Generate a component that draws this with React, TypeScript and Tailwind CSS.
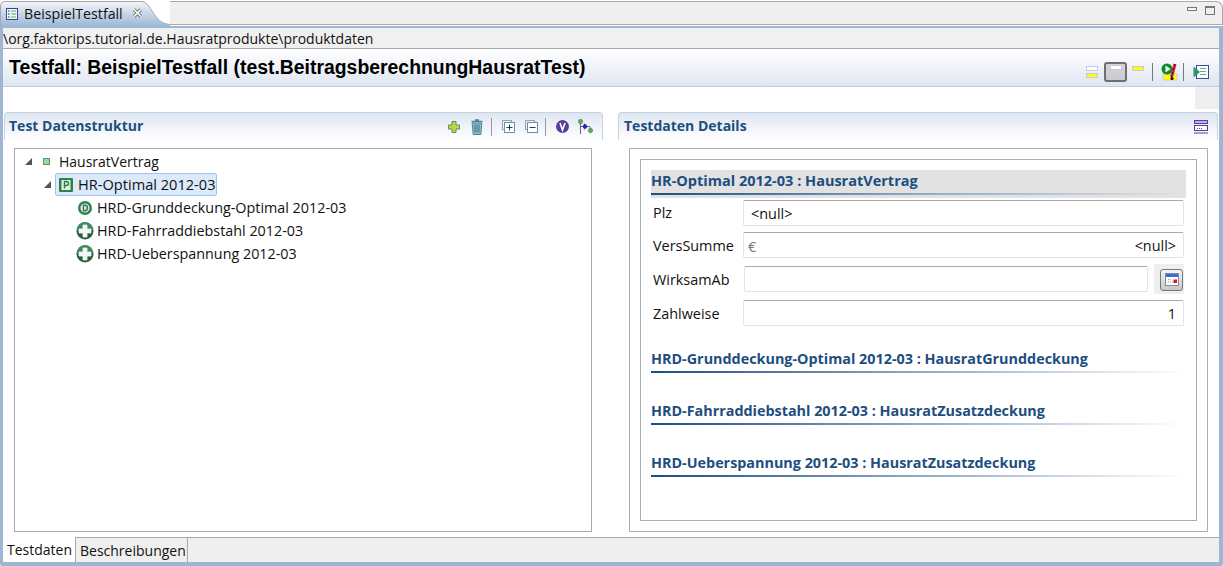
const ui = "font-['Open_Sans','Noto_Sans',sans-serif]"

function EditorIcon() {
  return (
    <svg width="12" height="12" viewBox="0 0 12 12" className="shrink-0">
      <rect x="0.5" y="0.5" width="11" height="11" fill="#f4f8f4" stroke="#35449a" />
      <path d="M2 3h1.5M2 6h1.5M2 9h1.5" stroke="#2f8f55" strokeWidth="1.4" />
      <path d="M5 3h5M5 6h5M5 9h5" stroke="#5aa878" />
    </svg>
  )
}

function CloseIcon() {
  return (
    <svg width="11" height="10" viewBox="0 0 11 10" className="shrink-0">
      <path d="M2 1.5l7 7M9 1.5l-7 7" stroke="#777" strokeWidth="3.4" />
      <path d="M2 1.5l7 7M9 1.5l-7 7" stroke="#fbfbfb" strokeWidth="1.6" />
    </svg>
  )
}

function TabCurve() {
  return (
    <svg width="28" height="25" viewBox="0 0 28 25" className="shrink-0">
      <defs>
        <linearGradient id="tabg" x1="0" y1="0" x2="0" y2="1">
          <stop offset="0" stopColor="#f2f5f9" />
          <stop offset="1" stopColor="#9db8d6" />
        </linearGradient>
      </defs>
      <path d="M0 0.5C9 0.5 12 23.5 28 23.5V25H0Z" fill="url(#tabg)" />
      <path d="M0 0.5C9 0.5 12 23.5 28 23.5" fill="none" stroke="#a8a8a8" />
    </svg>
  )
}

function LayoutIcon({ top, bottom }: { top?: string; bottom?: string }) {
  return (
    <svg width="14" height="14" viewBox="0 0 14 14" className="shrink-0">
      {top && <rect x="1.5" y="1.5" width="11" height="4" fill={top} stroke="#cdc4e8" />}
      {bottom && <rect x="1.5" y="8.5" width="11" height="4" fill={bottom} stroke="#cdc4e8" />}
    </svg>
  )
}

function RunIcon() {
  return (
    <svg width="17" height="18" viewBox="0 0 17 18" className="shrink-0">
      <rect x="2" y="11" width="14" height="6" fill="#ffff00" stroke="#d0c8e8" />
      <circle cx="6" cy="6" r="5.5" fill="#0c8a2b" />
      <path d="M4.5 2.5l5 3.5-5 3.5z" fill="#fff" />
      <path d="M14 1l-3.5 13" stroke="#e0182a" strokeWidth="3" />
      <path d="M14 1l-3.5 13" stroke="#1a1a1a" strokeWidth="1" strokeDasharray="2 2" />
      <circle cx="11" cy="15.5" r="1.6" fill="#111" />
    </svg>
  )
}

function TestListIcon() {
  return (
    <svg width="16" height="15" viewBox="0 0 16 15" className="shrink-0">
      <rect x="3.5" y="0.5" width="12" height="13" fill="#fff" stroke="#3a4a9c" />
      <path d="M7 3.5h6M7 6.5h6M7 9.5h6" stroke="#6aa88a" />
      <path d="M0.5 1.5L7 7l-6.5 5.5z" fill="#1f9a6a" />
    </svg>
  )
}

function PlusTool() {
  return (
    <svg width="12" height="12" viewBox="0 0 12 12" className="shrink-0">
      <path d="M4 0.5h4v3.5h3.5v4H8v3.5H4V8H0.5V4H4z" fill="#c4d34a" stroke="#4d9a5c" />
    </svg>
  )
}

function TrashTool() {
  return (
    <svg width="12" height="16" viewBox="0 0 12 16" className="shrink-0">
      <path d="M0.5 2.5h11M4 1h4" stroke="#4f7f98" strokeWidth="1.4" />
      <path d="M1.2 4h9.6l-1 11.5H2.2z" fill="#8fc0d0" stroke="#4f8098" />
      <path d="M4 5.5v8M6 5.5v8M8 5.5v8" stroke="#3f7088" />
    </svg>
  )
}

function TreeTool({ minus }: { minus?: boolean }) {
  return (
    <svg width="13" height="13" viewBox="0 0 13 13" className="shrink-0">
      <rect x="0.5" y="0.5" width="9" height="9" fill="#eef2f5" stroke="#8fa5b5" />
      <rect x="2.5" y="2.5" width="10" height="10" fill="#fff" stroke="#6f8fa5" />
      <path d="M4.5 7.5h6" stroke="#123f66" />
      {!minus && <path d="M7.5 4.5v6" stroke="#123f66" />}
    </svg>
  )
}

function VersionTool() {
  return (
    <svg width="13" height="13" viewBox="0 0 13 13" className="shrink-0">
      <circle cx="6.5" cy="6.5" r="6.5" fill="#5b3a9c" />
      <path d="M4 3l2.5 7L9 3" fill="none" stroke="#fff" strokeWidth="1.6" />
    </svg>
  )
}

function StructureTool() {
  return (
    <svg width="15" height="15" viewBox="0 0 15 15" className="shrink-0">
      <path d="M2.5 3v12M3 7.5h9M6.5 4.5v6M12 8l1 3" stroke="#667" />
      <circle cx="2.5" cy="2.5" r="2.2" fill="#65a865" stroke="#3f8a4f" strokeWidth="0.6" />
      <circle cx="7" cy="7.5" r="2.2" fill="#2424b0" />
      <circle cx="12.5" cy="11.5" r="2.2" fill="#65a865" stroke="#3f8a4f" strokeWidth="0.6" />
    </svg>
  )
}

function DetailsTool() {
  return (
    <svg width="14" height="14" viewBox="0 0 14 14" className="shrink-0">
      <rect x="0.5" y="0.5" width="13" height="3" fill="#bdb0dc" stroke="#5b3aa8" />
      <rect x="0.5" y="5.5" width="13" height="5" fill="#fff" stroke="#5b3aa8" />
      <path d="M3 8.5h1M5 8.5h1M7 8.5h1" stroke="#5b3aa8" />
      <path d="M0 13h14" stroke="#5b3aa8" />
    </svg>
  )
}

function CircleD() {
  return (
    <svg width="14" height="14" viewBox="0 0 14 14" className="shrink-0">
      <circle cx="7" cy="7" r="7" fill="#2f7f58" />
      <circle cx="7" cy="7" r="4.6" fill="#d8e8d6" />
      <path d="M5.5 4.2v5.6h1.2a2.8 2.8 0 000-5.6z" fill="none" stroke="#2f6f50" strokeWidth="1.3" />
    </svg>
  )
}

function CirclePlus() {
  return (
    <svg width="18" height="18" viewBox="0 0 18 18" className="shrink-0">
      <circle cx="9" cy="9" r="8.5" fill="#24603f" />
      <path d="M1 8a8 8 0 0116 0z" fill="#3f8a60" />
      <path d="M7 3h4v4h4v4h-4v4H7v-4H3V7h4z" fill="#f2f5f2" stroke="#f2f5f2" strokeWidth="0.8" />
    </svg>
  )
}

function PIcon() {
  return (
    <svg width="14" height="14" viewBox="0 0 14 14" className="shrink-0">
      <rect width="14" height="14" rx="1" fill="#2f7f4f" />
      <rect x="2.5" y="2" width="9" height="10" fill="#e6f0e0" />
      <path d="M5.5 10.5v-7h2a2 2 0 010 4h-2" fill="none" stroke="#2f7f4f" strokeWidth="1.5" />
    </svg>
  )
}

function Twistie() {
  return (
    <svg width="7" height="7" viewBox="0 0 7 7" className="shrink-0">
      <path d="M7 0v7H0z" fill="#555" />
    </svg>
  )
}

function CalendarIcon() {
  return (
    <svg width="14" height="13" viewBox="0 0 14 13" className="shrink-0">
      <rect x="0.5" y="0.5" width="13" height="12" fill="#fff" stroke="#8a8a98" />
      <rect x="1" y="1" width="12" height="3" fill="#2f6fe0" />
      <path d="M3 6.5h1M5 6.5h1M3 9h1M5 9h1M7 9h1" stroke="#9a9a9a" />
      <rect x="8.5" y="6.5" width="3.5" height="3.5" fill="#e01020" />
    </svg>
  )
}

function Field({ label, labelClass, children, right, gap }: { label: string; labelClass?: string; children?: React.ReactNode; right?: boolean; gap: string }) {
  return (
    <div className={`flex items-center h-[26px] ${gap}`}>
      <span className={`w-[92px] pl-[2px] text-[14.4px] text-[#111] ${labelClass ?? 'pt-[2px]'}`}>{label}</span>
      <div className={`flex-1 h-[26px] flex items-center px-[7px] pt-[2px] bg-white border border-[#dfe5ec] border-t-[#a9a9a9] rounded-[2px] text-[14.4px] text-[#111] ${right ? 'justify-end' : ''}`}>
        {children}
      </div>
    </div>
  )
}

function SubSection({ title }: { title: string }) {
  return (
    <div className="mb-[27px] h-[25px] flex flex-col justify-between">
      <span className="pt-px text-[14.36px] leading-[20px] font-bold text-[#1d4e7f]">{title}</span>
      <div className="h-[2px] bg-gradient-to-r from-[#1d4e7f] via-[#8eaac6] to-white" />
    </div>
  )
}

function PanelHeader({ title, titleClass, children }: { title: string; titleClass?: string; children: React.ReactNode }) {
  return (
    <div className="h-[28px] shrink-0 flex items-center px-[5px] rounded-t-[4px] border border-b-0 border-[#c3d3e3] bg-gradient-to-b from-[#dfe6f1] to-white">
      <span className={`mb-[2px] text-[14px] font-bold text-[#1d4e7f] ${titleClass ?? ''}`}>{title}</span>
      <div className="ml-auto flex items-center">{children}</div>
    </div>
  )
}

function TreeRow({ icon, label }: { icon: React.ReactNode; label: string }) {
  return (
    <div className="h-[23px] flex items-center pl-[61px] text-[14.35px] text-[#111]">
      <span className="w-[18px] flex justify-center shrink-0">{icon}</span>
      <span className="ml-[3px]">{label}</span>
    </div>
  )
}

export default function App() {
  return (
    <div className={`w-[1223px] h-[566px] flex flex-col overflow-hidden bg-white pt-px ${ui}`}>
      {/* top tab strip */}
      <div className="h-[25px] shrink-0 flex items-stretch">
        <div className="w-[142px] flex items-center pl-[5px] rounded-tl-[5px] border-l border-t border-[#a8a8a8] bg-gradient-to-b from-[#f2f5f9] to-[#9db8d6]">
          <EditorIcon />
          <span className="ml-[6px] text-[14.2px] text-[#111]">BeispielTestfall</span>
          <span className="ml-[9px] -mt-[3px]"><CloseIcon /></span>
        </div>
        <TabCurve />
        <div className="flex-1 mb-px flex items-start justify-end gap-[8px] pt-[4px] pr-[7px] bg-[#efefef] border-t border-r border-b border-[#a8a8a8] rounded-tr-[7px]">
          <div className="w-[10px] h-[4px] mt-[1px] border border-[#777] bg-[#f5f5f5]" />
          <div className="w-[10px] h-[9px] border border-[#777] border-t-[2px]" />
        </div>
      </div>

      {/* editor frame */}
      <div className="flex-1 min-h-0 flex flex-col border-l-[3px] border-r-[4px] border-t-[2px] border-b-[4px] border-[#9db6d3] rounded-b-[2px]">
        <div className="h-[21px] shrink-0 flex items-center border-b border-[#a8a8a8] text-[14px] text-[#111] bg-[#f0f0f0]">
          {'\\org.faktorips.tutorial.de.Hausratprodukte\\produktdaten'}
        </div>

        <div className="h-[38px] shrink-0 flex items-start pl-[6px] border-b border-[#b9cde5] bg-gradient-to-b from-white to-[#dfe6f1]">
          <span className="font-['Liberation_Sans',sans-serif] font-bold text-[19.4px] leading-[37px] text-black">
            Testfall: BeispielTestfall (test.BeitragsberechnungHausratTest)
          </span>
          <div className="ml-auto mt-[13px] flex items-center h-[20px] pr-[10px]">
            <LayoutIcon top="#ffffff" bottom="#ffff00" />
            <div className="w-[23px] h-[20px] ml-[5px] flex justify-center rounded-[3px] border-2 border-[#6e6e6e] bg-gradient-to-b from-[#d4d4d4] to-[#c8ccd2]">
              <div className="w-[12px] h-[5px] mt-[1px] bg-white border border-[#cdc4e8]" />
            </div>
            <span className="ml-[4px]"><LayoutIcon top="#ffff00" /></span>
            <div className="w-px h-[18px] bg-[#777] ml-[7px]" />
            <span className="ml-[8px]"><RunIcon /></span>
            <div className="w-px h-[18px] bg-[#777] ml-[5px]" />
            <span className="ml-[9px]"><TestListIcon /></span>
          </div>
        </div>

        <div className="flex-1 min-h-0 flex flex-col bg-white">
          <div className="h-[22px] shrink-0 flex justify-end">
            <div className="w-[24px] bg-[#efefef]" />
          </div>

          <div className="flex-1 min-h-0 flex gap-[15px] pl-[1px] pr-[1px] pt-[3px]">
            {/* left panel */}
            <div className="w-[599px] flex flex-col">
              <PanelHeader title="Test Datenstruktur" titleClass="-ml-px">
                <div className="flex items-center pr-[4px]">
                  <PlusTool />
                  <span className="ml-[11px]"><TrashTool /></span>
                  <div className="w-px h-[18px] bg-[#999] ml-[8px]" />
                  <span className="ml-[10px]"><TreeTool /></span>
                  <span className="ml-[10px]"><TreeTool minus /></span>
                  <div className="w-px h-[18px] bg-[#999] ml-[7px]" />
                  <span className="ml-[10px]"><VersionTool /></span>
                  <span className="ml-[9px]"><StructureTool /></span>
                </div>
              </PanelHeader>
              <div className="flex-1 min-h-0 ml-[10px] mr-[11px] mt-[8px] mb-[5px] border border-[#a9a9a9] bg-white pt-px">
                <div className="h-[23px] flex items-center pl-[10px] text-[14px] text-[#111]">
                  <Twistie />
                  <span className="ml-[11px] w-[7px] h-[7px] bg-[#9ed4a0] border border-[#4f9f60] shrink-0" />
                  <span className="ml-[9px]">HausratVertrag</span>
                </div>
                <div className="h-[23px] flex items-center pl-[29px]">
                  <Twistie />
                  <div className="ml-[4px] h-[23px] w-[162px] flex items-center pl-[3px] rounded-[2px] border border-[#9fc4ea] bg-[#dbeafa] text-[14.6px] text-[#111]">
                    <PIcon />
                    <span className="ml-[5px]">HR-Optimal 2012-03</span>
                  </div>
                </div>
                <TreeRow icon={<CircleD />} label="HRD-Grunddeckung-Optimal 2012-03" />
                <TreeRow icon={<CirclePlus />} label="HRD-Fahrraddiebstahl 2012-03" />
                <TreeRow icon={<CirclePlus />} label="HRD-Ueberspannung 2012-03" />
              </div>
            </div>

            {/* right panel */}
            <div className="flex-1 flex flex-col">
              <PanelHeader title="Testdaten Details">
                <span className="mr-[4px]"><DetailsTool /></span>
              </PanelHeader>
              <div className="flex-1 min-h-0 ml-[11px] mr-[10px] mt-[8px] mb-[5px] border border-[#a9aeb5] bg-white p-[10px]">
                <div className="h-full border border-[#a9aeb5] pt-[10px] px-[10px]">
                  <div className="h-[28px] bg-[#e2e2e2] flex flex-col">
                    <span className="h-[23px] text-[14.5px] leading-[21px] font-bold text-[#1d4e7f]">HR-Optimal 2012-03 : HausratVertrag</span>
                    <div className="h-[2px] bg-gradient-to-r from-[#1d4e7f] via-[#8eaac6] to-[#e2e2e2]" />
                  </div>
                  <div className="w-[533px] mt-[2px]">
                    <Field label="Plz" labelClass="pt-0" gap="mb-[6px]"><span>{'<null>'}</span></Field>
                    <Field label="VersSumme" right gap="mb-[8px]">
                      <span className="mr-auto -ml-[3px] mt-[1px] text-[#777]">€</span>
                      <span>{'<null>'}</span>
                    </Field>
                    <div className="flex items-center h-[26px] mb-[8px]">
                      <span className="w-[93px] pl-[2px] pt-[2px] text-[14.4px] text-[#111]">WirksamAb</span>
                      <div className="flex-1 h-[26px] bg-white border border-[#dfe5ec] border-t-[#a9a9a9] rounded-[2px]" />
                      <div className="w-[30px] h-[30px] ml-[6px] bg-[#efefef] flex items-center justify-end pr-[1px] shrink-0">
                        <div className="w-[23px] h-[22px] mt-[1px] rounded-[3px] border border-[#777] bg-gradient-to-b from-[#f5f5f5] to-[#c8c8c8] flex items-center justify-center">
                          <CalendarIcon />
                        </div>
                      </div>
                    </div>
                    <Field label="Zahlweise" right gap="mb-[22px]">1</Field>
                  </div>
                  <SubSection title="HRD-Grunddeckung-Optimal 2012-03 : HausratGrunddeckung" />
                  <SubSection title="HRD-Fahrraddiebstahl 2012-03 : HausratZusatzdeckung" />
                  <SubSection title="HRD-Ueberspannung 2012-03 : HausratZusatzdeckung" />
                </div>
              </div>
            </div>
          </div>

          {/* bottom tabs */}
          <div className="h-[25px] shrink-0 flex bg-[#efefef] border-t border-[#a8a8a8]">
            <div className="w-[72px] -mt-px flex items-center pl-[4px] bg-white text-[14px] text-[#111] rounded-bl-[2px]">Testdaten</div>
            <div className="w-[113px] flex items-center pl-[4px] border-x border-[#a8a8a8] text-[14px] text-[#111]">Beschreibungen</div>
          </div>
        </div>
      </div>
    </div>
  )
}
